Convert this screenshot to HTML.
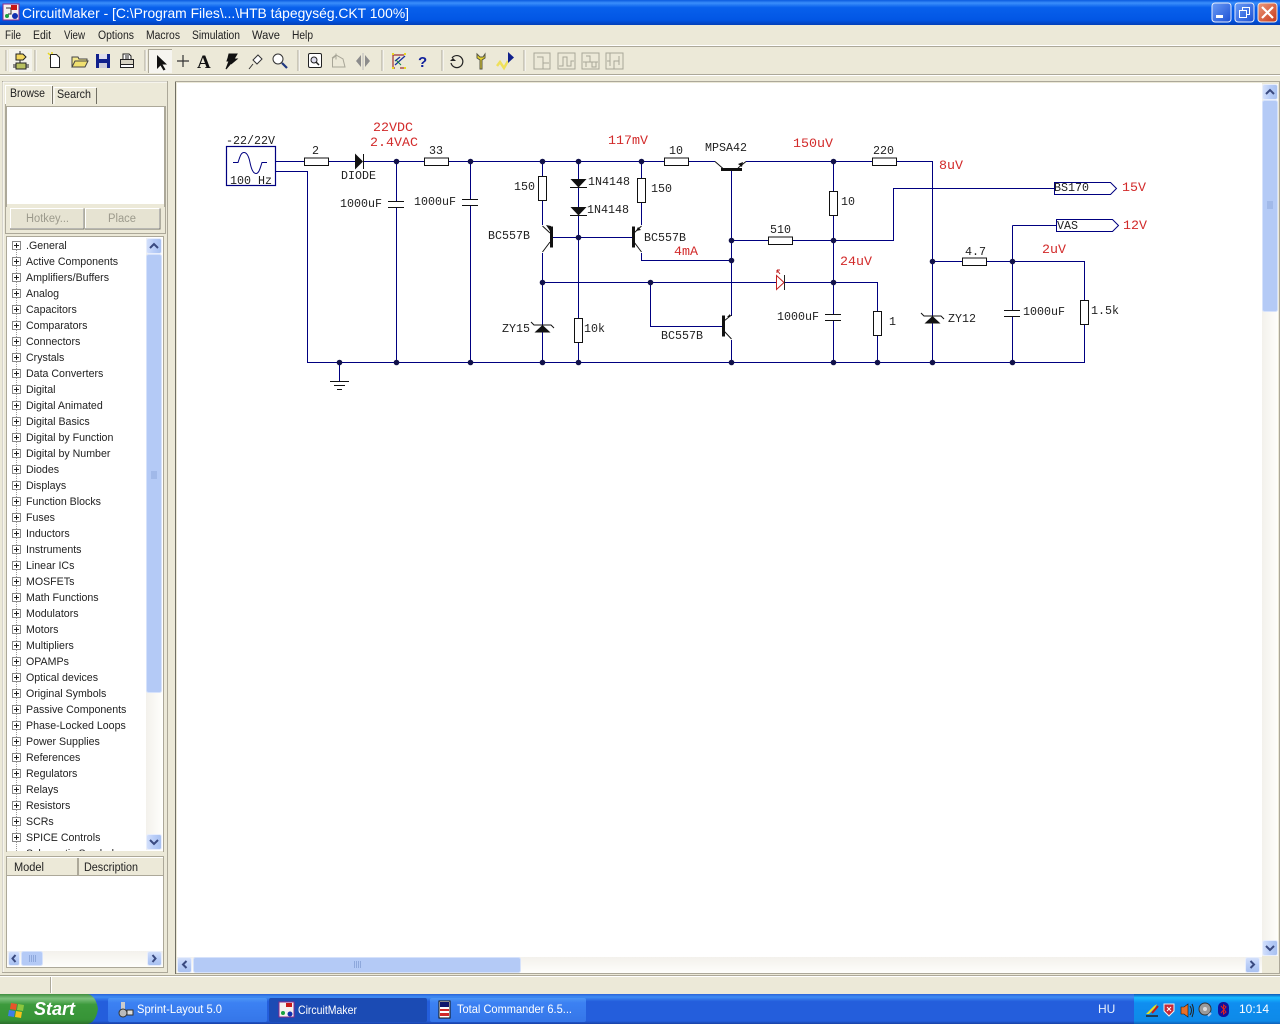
<!DOCTYPE html>
<html><head><meta charset="utf-8"><title>CircuitMaker</title>
<style>
html,body{margin:0;padding:0;background:#ece9d8;overflow:hidden}
svg{display:block;position:absolute;left:0;top:0}
.u{font-family:"Liberation Sans",sans-serif;font-size:11.5px;fill:#222}
.m{font-family:"Liberation Mono",monospace;font-size:11.67px;fill:#222}
.r{font-family:"Liberation Mono",monospace;font-size:13.33px;fill:#d22a2a}
.w{fill:none;stroke:#000080;stroke-width:1}
.c{fill:#fff;stroke:#111;stroke-width:1}
.b{fill:none;stroke:#111;stroke-width:1}
.d{fill:#11114a}
.i{fill:none;stroke:#222;stroke-width:1}
.g{fill:none;stroke:#a8a698;stroke-width:1}
</style></head><body>
<svg width="1280" height="1024" viewBox="0 0 1280 1024" xmlns="http://www.w3.org/2000/svg">
<defs>
<linearGradient id="tb" x1="0" y1="0" x2="0" y2="1"><stop offset="0" stop-color="#0a5ae0"/><stop offset=".12" stop-color="#3a8efa"/><stop offset=".3" stop-color="#0860ec"/><stop offset=".8" stop-color="#0256e4"/><stop offset="1" stop-color="#0340b8"/></linearGradient>
<linearGradient id="task" x1="0" y1="0" x2="0" y2="1"><stop offset="0" stop-color="#2a63d8"/><stop offset=".1" stop-color="#3f8cf3"/><stop offset=".25" stop-color="#245edc"/><stop offset=".9" stop-color="#245edc"/><stop offset="1" stop-color="#1941a5"/></linearGradient>
<linearGradient id="tray" x1="0" y1="0" x2="0" y2="1"><stop offset="0" stop-color="#0c59b9"/><stop offset=".12" stop-color="#18bbff"/><stop offset=".3" stop-color="#0f8ef0"/><stop offset=".9" stop-color="#0e8ae8"/><stop offset="1" stop-color="#0f60b8"/></linearGradient>
<linearGradient id="start" x1="0" y1="0" x2="0" y2="1"><stop offset="0" stop-color="#3f8f3f"/><stop offset=".15" stop-color="#7cc07c"/><stop offset=".35" stop-color="#3c9a3c"/><stop offset=".85" stop-color="#379437"/><stop offset="1" stop-color="#2b6f2b"/></linearGradient>
<linearGradient id="bt" x1="0" y1="0" x2="0" y2="1"><stop offset="0" stop-color="#4d96f5"/><stop offset=".2" stop-color="#3c81f3"/><stop offset="1" stop-color="#3576e8"/></linearGradient>
<linearGradient id="sbh" x1="0" y1="0" x2="0" y2="1"><stop offset="0" stop-color="#d4e0fb"/><stop offset=".5" stop-color="#b8cdf8"/><stop offset="1" stop-color="#a8c0f0"/></linearGradient>
<linearGradient id="sbv" x1="0" y1="0" x2="1" y2="0"><stop offset="0" stop-color="#d4e0fb"/><stop offset=".5" stop-color="#b8cdf8"/><stop offset="1" stop-color="#a8c0f0"/></linearGradient>
<linearGradient id="trh" x1="0" y1="0" x2="0" y2="1"><stop offset="0" stop-color="#f3f1ec"/><stop offset="1" stop-color="#fefefb"/></linearGradient>
<linearGradient id="trv" x1="0" y1="0" x2="1" y2="0"><stop offset="0" stop-color="#f3f1ec"/><stop offset="1" stop-color="#fefefb"/></linearGradient>
<linearGradient id="mn" x1="0" y1="0" x2="1" y2="1"><stop offset="0" stop-color="#6b9cf6"/><stop offset="1" stop-color="#1c50d4"/></linearGradient>
<linearGradient id="cl" x1="0" y1="0" x2="1" y2="1"><stop offset="0" stop-color="#ea9a7c"/><stop offset="1" stop-color="#c8381a"/></linearGradient>
<clipPath id="tree"><rect x="8" y="238" width="138" height="613"/></clipPath>
</defs>

<rect width="1280" height="1024" fill="#ece9d8"/>

<!-- title bar -->
<rect width="1280" height="25" fill="url(#tb)"/>
<rect x="3" y="4" width="16" height="16" fill="#f4f0f0" stroke="#8a2a8a"/>
<path d="M6 8h5v6h-3" fill="none" stroke="#333"/><rect x="11" y="5" width="6" height="5" fill="#c81818"/><circle cx="15" cy="16" r="3" fill="#1030b0"/><circle cx="7" cy="16" r="2" fill="#18a040"/>
<text x="22" y="18" font-family="Liberation Sans,sans-serif" font-size="14" fill="#fff" textLength="387" lengthAdjust="spacingAndGlyphs">CircuitMaker - [C:\Program Files\...\HTB tápegység.CKT 100%]</text>
<rect x="1212" y="3" width="19" height="19" rx="3" fill="url(#mn)" stroke="#e8eefc"/><rect x="1216" y="15" width="7" height="3" fill="#fff"/>
<rect x="1235" y="3" width="19" height="19" rx="3" fill="url(#mn)" stroke="#e8eefc"/><rect x="1239.500" y="10.500" width="7" height="7" fill="none" stroke="#fff"/><path d="M1242.500 10V7.500h7v7h-3" fill="none" stroke="#fff"/>
<rect x="1258" y="3" width="19" height="19" rx="3" fill="url(#cl)" stroke="#f0e8e4"/><path d="M1262 7l11 11M1273 7l-11 11" stroke="#fff" stroke-width="2.200"/>

<!-- menu -->
<text x="5" y="39" class="u" textLength="16" lengthAdjust="spacingAndGlyphs">File</text><text x="33" y="39" class="u" textLength="18" lengthAdjust="spacingAndGlyphs">Edit</text><text x="64" y="39" class="u" textLength="21" lengthAdjust="spacingAndGlyphs">View</text><text x="98" y="39" class="u" textLength="36" lengthAdjust="spacingAndGlyphs">Options</text><text x="146" y="39" class="u" textLength="34" lengthAdjust="spacingAndGlyphs">Macros</text><text x="192" y="39" class="u" textLength="48" lengthAdjust="spacingAndGlyphs">Simulation</text><text x="252" y="39" class="u" textLength="28" lengthAdjust="spacingAndGlyphs">Wave</text><text x="292" y="39" class="u" textLength="21" lengthAdjust="spacingAndGlyphs">Help</text>
<path d="M0 45.500H1280" stroke="#fff"/><path d="M0 46.500H1280" stroke="#aca899"/>
<path d="M0 74.500H1280" stroke="#aca899"/><path d="M0 75.500H1280" stroke="#fff"/>

<!-- toolbar separators -->
<path d="M6 50V71M35 50V71M145 50V71M298 50V71M382 50V71M442 50V71M524 50V71" stroke="#aca899"/>
<path d="M7 50V71M36 50V71M146 50V71M299 50V71M383 50V71M443 50V71M525 50V71" stroke="#fff"/>
<rect x="9" y="49" width="23" height="23" fill="#f4f3ec"/>
<rect x="148" y="49" width="24" height="24" fill="#f6f5f0"/>
<path d="M148.500 73V49.500H172" stroke="#aca899" fill="none"/>

<!-- toolbar icons -->
<g>
<path d="M16 54h7l3 3-3 3h-7zM20 60v3M20 51v3" fill="#f4d860" stroke="#222"/>
<rect x="16" y="63" width="10" height="6" fill="#b8c060" stroke="#222"/><path d="M13 65h3M13 67h3M26 65h3M26 67h3" stroke="#222"/>
<path d="M50.500 54.500h6l3 3v10h-9z" fill="#fff" stroke="#222"/><path d="M48 53l2 2M49 58h1M52 52v2" stroke="#e8d820" stroke-width="1.500"/>
<path d="M72 66.500V57h6l1 2h8v2" fill="#f4e88c" stroke="#444"/><path d="M72 67l3-6h13l-3 6z" fill="#f0e070" stroke="#444"/>
<rect x="96" y="54" width="14" height="14" fill="#10208c"/><rect x="99" y="54" width="8" height="5" fill="#dde"/><rect x="99" y="63" width="8" height="5" fill="#ccd"/>
<path d="M123 59v-5h6l2 2v3" fill="#fff" stroke="#222"/><rect x="120.500" y="59.500" width="13" height="5" fill="#d8d4c4" stroke="#222"/><rect x="120.500" y="64.500" width="13" height="3" fill="#fff" stroke="#222"/><path d="M125 56h4M125 58h4" stroke="#222"/>
<path d="M157 55v14l3.500-3.500 3 5 2-1-3-5h4.500z" fill="#111"/>
<path d="M183 55v12M177 61h12" stroke="#333" stroke-width="1.200"/>
<text x="197" y="68" font-family="Liberation Serif,serif" font-weight="bold" font-size="19" fill="#111">A</text>
<path d="M229 54h8l-3 5h3l-6 5 1-2-6 7 3-8h-2l1-3z" fill="#111" stroke="#111"/>
<path d="M258 55l4 4-5 5-4-4zM253 64l-4 5" fill="#fff" stroke="#333"/>
<circle cx="278" cy="59" r="5" fill="#fff" stroke="#333"/><path d="M282 63l5 5" stroke="#203880" stroke-width="2.200"/>
<rect x="308.500" y="53.500" width="13" height="14" rx="1.500" fill="#fff" stroke="#222"/><circle cx="314" cy="60" r="3" fill="#dde" stroke="#222"/><path d="M316 62l3 3" stroke="#222" stroke-width="1.500"/>
<path d="M332.500 67.500v-9l4-3M336 53.500v6M332 58l4-3 7 4 2 8h-12" class="g"/>
<path d="M361 55v12l-5-6zM365 55v12l5-6z" fill="#8c8c8c"/><path d="M363 53v17" stroke="#bbb"/>
<path d="M393 55l11 0M393 55v13h2M404 68h-4" fill="none" stroke="#a03030" stroke-width="1.200"/><path d="M395 65l10-9M395 61l5-4" stroke="#1a30a0" stroke-width="1.300"/><path d="M392 54h2M404 54h2M392 68h2M404 68h2" stroke="#e8d820" stroke-width="2"/><path d="M396 60l5 5" stroke="#108040"/>
<text x="418" y="67" font-family="Liberation Sans,sans-serif" font-weight="bold" font-size="15" fill="#10209c">?</text>
<path d="M452 58a6 6 0 1 1-1 5" fill="none" stroke="#222" stroke-width="1.200"/><path d="M450 61h6l-3-3z" fill="#222"/>
<path d="M477 54v4l3 2v9h2v-9l3-2v-4l-2 3h-3z" fill="#e8d428" stroke="#554"/>
<path d="M497 66l3-4 4 6 4-7" fill="none" stroke="#efe05a" stroke-width="2.500"/><path d="M508 52l6 5.500-6 5.500z" fill="#10208c"/>
<rect x="534" y="53" width="16" height="16" class="g"/><path d="M537 57h6v6h6M543 63v6" class="g"/>
<rect x="558" y="53" width="17" height="16" class="g"/><path d="M559 66h4v-9h4v9h4v-5h3" class="g"/>
<rect x="582" y="53" width="17" height="16" class="g"/><path d="M583 62h15M586 56h4v6M592 62v5h4v-5M586 62v5" class="g"/>
<rect x="606" y="53" width="17" height="16" class="g"/><path d="M610 53v8h-3M610 61v5M614 69v-8h5v-5M619 61v4" class="g"/>
</g>

<!-- left panel -->
<rect x="2.500" y="81.500" width="165" height="891" fill="#ece9d8" stroke="#aca899"/>
<path d="M3 82H167M3 82V972" stroke="#fff"/>
<path d="M5.500 104V85.500H52V104" fill="#ece9d8" stroke="#fff"/><path d="M52.500 86V104" stroke="#716f64"/>
<path d="M54 104V87.500H96" fill="none" stroke="#fff"/><path d="M96.500 88V104" stroke="#716f64"/>
<text x="10" y="97" class="u" style="font-size:12px" textLength="35" lengthAdjust="spacingAndGlyphs">Browse</text>
<text x="57" y="98" class="u" style="font-size:12px" textLength="34" lengthAdjust="spacingAndGlyphs">Search</text>
<rect x="6.500" y="106.500" width="158" height="100" fill="#fff" stroke="#aca899"/>
<rect x="7" y="204" width="157" height="29" fill="#ece9d8"/>
<path d="M165.500 106V233.500H5.500V104" fill="none" stroke="#aca899"/>
<rect x="10.500" y="208.500" width="73" height="20" fill="#e6e3d2" stroke="#fff"/><path d="M84 208.500V229H10" stroke="#716f64" fill="none"/>
<rect x="85.500" y="208.500" width="74" height="20" fill="#e6e3d2" stroke="#fff"/><path d="M160 208.500V229H85" stroke="#716f64" fill="none"/>
<text x="26" y="222" class="u" style="fill:#9c9a8c" textLength="43" lengthAdjust="spacingAndGlyphs">Hotkey...</text>
<text x="108" y="222" class="u" style="fill:#9c9a8c" textLength="28" lengthAdjust="spacingAndGlyphs">Place</text>

<!-- tree -->
<rect x="6.500" y="236.500" width="157" height="615" fill="#fff" stroke="#aca899"/>
<path d="M16.500 246V851" stroke="#999" stroke-dasharray="1 1"/>
<g clip-path="url(#tree)"><g transform="translate(26 -1) scale(.925 1) translate(-26 0)">
<text x="26" y="250" class="u">.General</text>
<text x="26" y="266" class="u">Active Components</text>
<text x="26" y="282" class="u">Amplifiers/Buffers</text>
<text x="26" y="298" class="u">Analog</text>
<text x="26" y="314" class="u">Capacitors</text>
<text x="26" y="330" class="u">Comparators</text>
<text x="26" y="346" class="u">Connectors</text>
<text x="26" y="362" class="u">Crystals</text>
<text x="26" y="378" class="u">Data Converters</text>
<text x="26" y="394" class="u">Digital</text>
<text x="26" y="410" class="u">Digital Animated</text>
<text x="26" y="426" class="u">Digital Basics</text>
<text x="26" y="442" class="u">Digital by Function</text>
<text x="26" y="458" class="u">Digital by Number</text>
<text x="26" y="474" class="u">Diodes</text>
<text x="26" y="490" class="u">Displays</text>
<text x="26" y="506" class="u">Function Blocks</text>
<text x="26" y="522" class="u">Fuses</text>
<text x="26" y="538" class="u">Inductors</text>
<text x="26" y="554" class="u">Instruments</text>
<text x="26" y="570" class="u">Linear ICs</text>
<text x="26" y="586" class="u">MOSFETs</text>
<text x="26" y="602" class="u">Math Functions</text>
<text x="26" y="618" class="u">Modulators</text>
<text x="26" y="634" class="u">Motors</text>
<text x="26" y="650" class="u">Multipliers</text>
<text x="26" y="666" class="u">OPAMPs</text>
<text x="26" y="682" class="u">Optical devices</text>
<text x="26" y="698" class="u">Original Symbols</text>
<text x="26" y="714" class="u">Passive Components</text>
<text x="26" y="730" class="u">Phase-Locked Loops</text>
<text x="26" y="746" class="u">Power Supplies</text>
<text x="26" y="762" class="u">References</text>
<text x="26" y="778" class="u">Regulators</text>
<text x="26" y="794" class="u">Relays</text>
<text x="26" y="810" class="u">Resistors</text>
<text x="26" y="826" class="u">SCRs</text>
<text x="26" y="842" class="u">SPICE Controls</text>
<text x="26" y="858" class="u">Schematic Symbols</text>
</g></g>
<g fill="#fff" stroke="#888">
<rect x="12.500" y="241.500" width="8" height="8"/><rect x="12.500" y="257.500" width="8" height="8"/><rect x="12.500" y="273.500" width="8" height="8"/><rect x="12.500" y="289.500" width="8" height="8"/><rect x="12.500" y="305.500" width="8" height="8"/><rect x="12.500" y="321.500" width="8" height="8"/><rect x="12.500" y="337.500" width="8" height="8"/><rect x="12.500" y="353.500" width="8" height="8"/><rect x="12.500" y="369.500" width="8" height="8"/><rect x="12.500" y="385.500" width="8" height="8"/><rect x="12.500" y="401.500" width="8" height="8"/><rect x="12.500" y="417.500" width="8" height="8"/><rect x="12.500" y="433.500" width="8" height="8"/><rect x="12.500" y="449.500" width="8" height="8"/><rect x="12.500" y="465.500" width="8" height="8"/><rect x="12.500" y="481.500" width="8" height="8"/><rect x="12.500" y="497.500" width="8" height="8"/><rect x="12.500" y="513.500" width="8" height="8"/><rect x="12.500" y="529.500" width="8" height="8"/><rect x="12.500" y="545.500" width="8" height="8"/><rect x="12.500" y="561.500" width="8" height="8"/><rect x="12.500" y="577.500" width="8" height="8"/><rect x="12.500" y="593.500" width="8" height="8"/><rect x="12.500" y="609.500" width="8" height="8"/><rect x="12.500" y="625.500" width="8" height="8"/><rect x="12.500" y="641.500" width="8" height="8"/><rect x="12.500" y="657.500" width="8" height="8"/><rect x="12.500" y="673.500" width="8" height="8"/><rect x="12.500" y="689.500" width="8" height="8"/><rect x="12.500" y="705.500" width="8" height="8"/><rect x="12.500" y="721.500" width="8" height="8"/><rect x="12.500" y="737.500" width="8" height="8"/><rect x="12.500" y="753.500" width="8" height="8"/><rect x="12.500" y="769.500" width="8" height="8"/><rect x="12.500" y="785.500" width="8" height="8"/><rect x="12.500" y="801.500" width="8" height="8"/><rect x="12.500" y="817.500" width="8" height="8"/><rect x="12.500" y="833.500" width="8" height="8"/>
</g>
<path stroke="#222" fill="none" d="M14 245.500h5M16.500 243v5M14 261.500h5M16.500 259v5M14 277.500h5M16.500 275v5M14 293.500h5M16.500 291v5M14 309.500h5M16.500 307v5M14 325.500h5M16.500 323v5M14 341.500h5M16.500 339v5M14 357.500h5M16.500 355v5M14 373.500h5M16.500 371v5M14 389.500h5M16.500 387v5M14 405.500h5M16.500 403v5M14 421.500h5M16.500 419v5M14 437.500h5M16.500 435v5M14 453.500h5M16.500 451v5M14 469.500h5M16.500 467v5M14 485.500h5M16.500 483v5M14 501.500h5M16.500 499v5M14 517.500h5M16.500 515v5M14 533.500h5M16.500 531v5M14 549.500h5M16.500 547v5M14 565.500h5M16.500 563v5M14 581.500h5M16.500 579v5M14 597.500h5M16.500 595v5M14 613.500h5M16.500 611v5M14 629.500h5M16.500 627v5M14 645.500h5M16.500 643v5M14 661.500h5M16.500 659v5M14 677.500h5M16.500 675v5M14 693.500h5M16.500 691v5M14 709.500h5M16.500 707v5M14 725.500h5M16.500 723v5M14 741.500h5M16.500 739v5M14 757.500h5M16.500 755v5M14 773.500h5M16.500 771v5M14 789.500h5M16.500 787v5M14 805.500h5M16.500 803v5M14 821.500h5M16.500 819v5M14 837.500h5M16.500 835v5"/>
<rect x="7" y="851" width="156" height="5" fill="#ece9d8"/>
<rect x="146" y="238" width="16" height="612" fill="url(#trv)"/>
<rect x="146.500" y="238.500" width="15" height="15" rx="2" fill="url(#sbv)" stroke="#e8eefc"/><path d="M150 248l4-4 4 4" fill="none" stroke="#3a4a80" stroke-width="2"/>
<rect x="146.500" y="254.500" width="15" height="438" rx="2" fill="#b4caf6" stroke="#d6e2fb"/><path d="M151 472h6M151 474h6M151 476h6M151 478h6" stroke="#8ea8dc"/>
<rect x="146.500" y="834.500" width="15" height="15" rx="2" fill="url(#sbv)" stroke="#e8eefc"/><path d="M150 840l4 4 4-4" fill="none" stroke="#3a4a80" stroke-width="2"/>

<!-- model list -->
<rect x="6.500" y="856.500" width="157" height="111" fill="#fff" stroke="#aca899"/>
<rect x="7" y="857" width="156" height="18" fill="#ece9d8"/>
<path d="M7 875.500H163" stroke="#aca899"/><path d="M77.500 858V875M78.500 858V875" stroke="#aca899"/><path d="M7 857.500H163" stroke="#fff"/>
<text x="14" y="871" class="u" textLength="30" lengthAdjust="spacingAndGlyphs">Model</text><text x="84" y="871" class="u" textLength="54" lengthAdjust="spacingAndGlyphs">Description</text>
<rect x="7" y="951" width="156" height="16" fill="url(#trh)"/>
<rect x="8.500" y="951.500" width="11" height="14" rx="2" fill="url(#sbh)" stroke="#e8eefc"/><path d="M15.500 955l-3 3.500 3 3.500" fill="none" stroke="#3a4a80" stroke-width="2"/>
<rect x="21.500" y="951.500" width="21" height="14" rx="2" fill="#b4caf6" stroke="#d6e2fb"/><path d="M29.500 955v7M31.500 955v7M33.500 955v7M35.500 955v7" stroke="#8ea8dc"/>
<rect x="147.500" y="951.500" width="14" height="14" rx="2" fill="url(#sbh)" stroke="#e8eefc"/><path d="M152.500 955l3 3.500-3 3.500" fill="none" stroke="#3a4a80" stroke-width="2"/>

<!-- canvas -->
<rect x="175.500" y="81.500" width="1104" height="892" fill="#ece9d8" stroke="#aca899"/>
<path d="M175.500 82V974" stroke="#716f64"/>
<rect x="177" y="83" width="1085" height="874" fill="#fff"/>
<rect x="1262" y="84" width="16" height="872" fill="url(#trv)"/>
<rect x="1262.500" y="84.500" width="15" height="15" rx="2" fill="url(#sbv)" stroke="#e8eefc"/><path d="M1266 94l4-4 4 4" fill="none" stroke="#3a4a80" stroke-width="2"/>
<rect x="1262.500" y="100.500" width="15" height="211" rx="2" fill="#b4caf6" stroke="#d6e2fb"/><path d="M1267 202h6M1267 204h6M1267 206h6M1267 208h6" stroke="#8ea8dc"/>
<rect x="1262.500" y="940.500" width="15" height="15" rx="2" fill="url(#sbv)" stroke="#e8eefc"/><path d="M1266 946l4 4 4-4" fill="none" stroke="#3a4a80" stroke-width="2"/>
<rect x="177" y="957" width="1085" height="16" fill="url(#trh)"/>
<rect x="177.500" y="957.500" width="14" height="15" rx="2" fill="url(#sbh)" stroke="#e8eefc"/><path d="M186.500 961l-3.500 3.500 3.500 3.500" fill="none" stroke="#3a4a80" stroke-width="2"/>
<rect x="193.500" y="957.500" width="327" height="15" rx="2" fill="#b4caf6" stroke="#d6e2fb"/><path d="M354.500 961v7M356.500 961v7M358.500 961v7M360.500 961v7" stroke="#8ea8dc"/>
<rect x="1245.500" y="957.500" width="14" height="15" rx="2" fill="url(#sbh)" stroke="#e8eefc"/><path d="M1250.500 961l3.500 3.500-3.500 3.500" fill="none" stroke="#3a4a80" stroke-width="2"/>

<!-- status -->
<path d="M0 975.500H1280" stroke="#aca899"/><path d="M0 976.500H1280" stroke="#fff"/><path d="M50.500 977V993" stroke="#aca899"/><path d="M51.500 977V993" stroke="#fff"/>

<!-- schematic wires -->
<path class="w" d="M275 161.500H304M329 161.500H355M363 161.500H424M449 161.500H664M689 161.500H715M746 161.500H873M897 161.500H932.500V316M932.500 323V362.500M275 171.500H307.500V362.500H1084.500V324M1084.500 300V261.500H987M962 261.500H932.500"/>
<path class="w" d="M396.500 161V201M396.500 207V362M470.500 161V199M470.500 206V362M542.500 161V176M542.500 201V225M542.500 253V325M542.500 332V362M578.500 161V179M578.500 188V207M578.500 216V318M578.500 342V362M641.500 161V178M641.500 203V225M641.500 253V260.500H731.500M731.500 170V316M731.500 340V362M731.500 240.500H768M793 240.500H893.500V188.500H1054M542.500 282.500H776M785 282.500H877.500V311M877.500 335V362M650.500 282.500V326.500H723M833.500 161V191M833.500 216V314M833.500 321V362M1012.500 225.500V310M1012.500 317V362M1012.500 225.500H1056M551 237.500H633M339.500 362V381"/>
<!-- source -->
<rect x="226.500" y="146.500" width="49" height="39" fill="#fff" stroke="#000080" stroke-width="1.200"/>
<path class="w" d="M233 162.500h5c2-6 3-10 6-10s5 5 6 10 3 11 6 11 4-5 6-11h5"/>
<!-- ground -->
<path class="b" d="M330 381.500H349M334 385.500H345M337 389.500H342"/>
<!-- resistors -->
<rect class="c" x="304.500" y="158" width="24" height="7.500"/><rect class="c" x="424.500" y="158" width="24" height="7.500"/><rect class="c" x="664.500" y="158" width="24" height="7.500"/><rect class="c" x="872.500" y="158" width="24" height="7.500"/><rect class="c" x="768.500" y="237" width="24" height="7.500"/><rect class="c" x="962.500" y="258" width="24" height="7.500"/>
<rect class="c" x="538.500" y="176.500" width="8" height="24"/><rect class="c" x="637.500" y="178.500" width="8" height="24"/><rect class="c" x="574.500" y="318.500" width="8" height="24"/><rect class="c" x="829.500" y="191.500" width="8" height="24"/><rect class="c" x="873.500" y="311.500" width="8" height="24"/><rect class="c" x="1080.500" y="300.500" width="8" height="24"/>
<!-- caps -->
<path class="b" d="M388 201.500H404M388 207.500H404M462 199.500H478M462 205.500H478M825 314.500H841M825 320.500H841M1004 310.500H1020M1004 316.500H1020"/>
<!-- diodes -->
<path d="M355 153.500l8 8-8 8z" fill="#111"/><path d="M363.500 154V169" stroke="#111"/>
<path d="M570.500 179h16l-8 8.500z" fill="#111"/><path d="M570 187.500H587M570 215.500H587" stroke="#111"/><path d="M570.500 207h16l-8 8.500z" fill="#111"/>
<!-- zeners -->
<path d="M534.500 332.500h16l-8-7.500z" fill="#111"/><path class="b" d="M531 322l3 3H551l3 3"/>
<path d="M924.500 323.500h16l-8-7.500z" fill="#111"/><path class="b" d="M921 313l3 3H941l3 3"/>
<!-- LED -->
<path d="M776.500 275.500l7.500 7-7.500 7z" fill="#fff" stroke="#c02020"/><path d="M784.500 275V290" stroke="#222"/><path d="M780 274l-3-4M777 270v3M777 270h3" stroke="#c02020" fill="none"/>
<!-- transistors -->
<path d="M550 226.500h3v21h-3zM632 226.500h3v21h-3zM722 315.500h3v21h-3zM721 168h21v3h-21z" fill="#111"/>
<path class="b" d="M550 233l-7.500-7M550 242l-7.500 10M634 233l7.500-7M634 242l7.500 10M724 321l7.500-6M724 331l7.500 8M715 161.500l8 7M738 168l8-6.500"/>
<path d="M546 225l5 1-1 5zM636 231l2-4 3 3zM730 317l-3 0 3-3zM743 162l-1 5-4-3z" fill="#111"/>
<!-- nodes -->
<g class="d">
<circle cx="396.500" cy="161.500" r="2.800"/><circle cx="470.500" cy="161.500" r="2.800"/><circle cx="542.500" cy="161.500" r="2.800"/><circle cx="578.500" cy="161.500" r="2.800"/><circle cx="641.500" cy="161.500" r="2.800"/><circle cx="833.500" cy="161.500" r="2.800"/><circle cx="578.500" cy="237.500" r="2.800"/><circle cx="731.500" cy="240.500" r="2.800"/><circle cx="833.500" cy="240.500" r="2.800"/><circle cx="731.500" cy="260.500" r="2.800"/><circle cx="542.500" cy="282.500" r="2.800"/><circle cx="650.500" cy="282.500" r="2.800"/><circle cx="833.500" cy="282.500" r="2.800"/><circle cx="932.500" cy="261.500" r="2.800"/><circle cx="1012.500" cy="261.500" r="2.800"/>
<circle cx="339.500" cy="362.500" r="2.800"/><circle cx="396.500" cy="362.500" r="2.800"/><circle cx="470.500" cy="362.500" r="2.800"/><circle cx="542.500" cy="362.500" r="2.800"/><circle cx="578.500" cy="362.500" r="2.800"/><circle cx="731.500" cy="362.500" r="2.800"/><circle cx="833.500" cy="362.500" r="2.800"/><circle cx="877.500" cy="362.500" r="2.800"/><circle cx="932.500" cy="362.500" r="2.800"/><circle cx="1012.500" cy="362.500" r="2.800"/>
</g>
<!-- ports -->
<path d="M1054.500 182.500H1110.500L1116.500 188.500L1110.500 194.500H1054.500Z" fill="#fff" stroke="#000080"/>
<path d="M1056.500 219.500H1112.500L1118.500 225.500L1112.500 231.500H1056.500Z" fill="#fff" stroke="#000080"/>
<!-- labels -->
<text x="226" y="144" class="m">-22/22V</text><text x="230" y="184" class="m">100 Hz</text><text x="312" y="154" class="m">2</text><text x="341" y="179" class="m">DIODE</text><text x="429" y="154" class="m">33</text><text x="340" y="207" class="m">1000uF</text><text x="414" y="205" class="m">1000uF</text><text x="669" y="154" class="m">10</text><text x="705" y="151" class="m">MPSA42</text><text x="873" y="154" class="m">220</text><text x="514" y="190" class="m">150</text><text x="588" y="185" class="m">1N4148</text><text x="587" y="213" class="m">1N4148</text><text x="651" y="192" class="m">150</text><text x="488" y="239" class="m">BC557B</text><text x="644" y="241" class="m">BC557B</text><text x="770" y="233" class="m">510</text><text x="841" y="205" class="m">10</text><text x="1054" y="191" class="m">BS170</text><text x="1057" y="229" class="m">VAS</text><text x="965" y="255" class="m">4.7</text><text x="502" y="332" class="m">ZY15</text><text x="584" y="332" class="m">10k</text><text x="661" y="339" class="m">BC557B</text><text x="777" y="320" class="m">1000uF</text><text x="889" y="325" class="m">1</text><text x="948" y="322" class="m">ZY12</text><text x="1023" y="315" class="m">1000uF</text><text x="1091" y="314" class="m">1.5k</text>
<text x="373" y="131" class="r">22VDC</text><text x="370" y="146" class="r">2.4VAC</text><text x="608" y="144" class="r">117mV</text><text x="793" y="147" class="r">150uV</text><text x="939" y="169" class="r">8uV</text><text x="1122" y="191" class="r">15V</text><text x="1123" y="229" class="r">12V</text><text x="674" y="255" class="r">4mA</text><text x="840" y="265" class="r">24uV</text><text x="1042" y="253" class="r">2uV</text>

<!-- taskbar -->
<rect y="994" width="1280" height="30" fill="url(#task)"/>
<path d="M0 1024V994H88Q96 996 98 1009Q96 1022 88 1024Z" fill="url(#start)"/>
<path d="M11 1003l6 1-1 6-6-1z" fill="#e8542a"/><path d="M18 1004l6 1-1 6-6-1z" fill="#8cc63f"/><path d="M9 1010l6 1-1 6-6-1z" fill="#3f7ee8"/><path d="M16 1011l6 1-1 6-6-1z" fill="#f6c21c"/>
<text x="34" y="1015" font-family="Liberation Sans,sans-serif" font-style="italic" font-weight="bold" font-size="18" fill="#fff">Start</text>
<rect x="108" y="998" width="159" height="24" rx="2" fill="url(#bt)"/>
<rect x="269" y="998" width="158" height="24" rx="2" fill="#1b4bb4"/>
<rect x="430" y="998" width="156" height="24" rx="2" fill="url(#bt)"/>
<rect x="121" y="1002" width="4" height="8" fill="#ccc"/><circle cx="123" cy="1013" r="4" fill="#bbb" stroke="#333"/><rect x="127" y="1010" width="6" height="5" fill="#ddd" stroke="#333"/>
<rect x="279" y="1002" width="15" height="15" fill="#f4f0f0" stroke="#8a2a8a"/><rect x="286" y="1003" width="6" height="4" fill="#c81818"/><circle cx="290" cy="1014" r="2.500" fill="#1030b0"/><circle cx="283" cy="1013" r="2" fill="#18a040"/>
<rect x="439" y="1001" width="11" height="17" fill="#fff" stroke="#111"/><rect x="440" y="1002" width="9" height="5" fill="#10186c"/><rect x="440" y="1009" width="9" height="2" fill="#d02828"/><rect x="440" y="1013" width="9" height="3" fill="#d02828"/>
<text x="137" y="1013" class="u" style="fill:#fff;font-size:12px" textLength="85" lengthAdjust="spacingAndGlyphs">Sprint-Layout 5.0</text>
<text x="298" y="1014" class="u" style="fill:#fff;font-size:12px" textLength="59" lengthAdjust="spacingAndGlyphs">CircuitMaker</text>
<text x="457" y="1013" class="u" style="fill:#fff;font-size:12px" textLength="115" lengthAdjust="spacingAndGlyphs">Total Commander 6.5...</text>
<text x="1098" y="1013" class="u" style="fill:#e8f0fc;font-size:12px">HU</text>
<rect x="1134" y="994" width="146" height="30" fill="url(#tray)"/>
<path d="M1146 1014l8-8 3-2-2 4-6 6z" fill="#e8e020"/><path d="M1152 1013l6-7" stroke="#c81818" stroke-width="2"/><path d="M1146 1016h12" stroke="#222" stroke-width="1.500"/>
<path d="M1164 1004h10v7l-5 5-5-5z" fill="#c82838" stroke="#f0f0f0"/><path d="M1167 1007l4 4M1171 1007l-4 4" stroke="#fff"/>
<path d="M1181 1007h3l4-3v13l-4-3h-3z" fill="#e87028" stroke="#301808" stroke-width=".6"/><path d="M1190 1006q3 4.500 0 9M1192 1004q3 6 0 13" fill="none" stroke="#222"/>
<circle cx="1205" cy="1009" r="6" fill="#9a9a9a" stroke="#333"/><circle cx="1205" cy="1009" r="2" fill="#ddd"/><path d="M1208 1016l3-3" stroke="#a8c8f0" stroke-width="2"/>
<rect x="1218" y="1002" width="11" height="15" rx="5" fill="#10109c"/><path d="M1221 1006l5 6-2.500 2v-9l2.500 2-5 6" fill="none" stroke="#e02020"/>
<text x="1239" y="1013" class="u" style="fill:#fff;font-size:12px">10:14</text>
</svg>
</body></html>
